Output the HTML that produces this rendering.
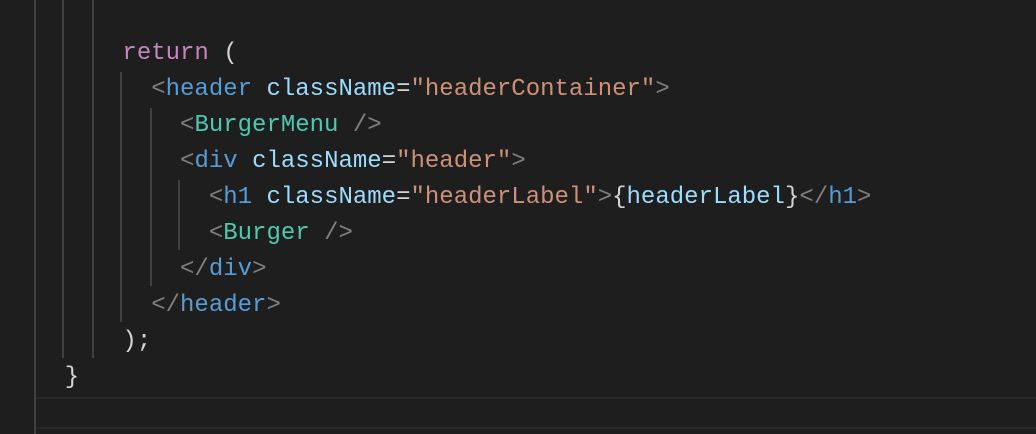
<!DOCTYPE html>
<html><head><meta charset="utf-8"><style>
html,body{margin:0;padding:0;background:#1e1e1e;width:1036px;height:434px;overflow:hidden;position:relative}
.l{position:absolute;left:36px;height:36px;line-height:36px;font-family:"Liberation Mono",monospace;font-size:24px;white-space:pre;color:#d4d4d4}
.g{position:absolute;width:2px;background:#404040}
.k{color:#c586c0}.p{color:#808080}.t{color:#569cd6}.a{color:#9cdcfe}.s{color:#ce9178}.c{color:#4ec9b0}
.cur{position:absolute;left:36px;right:0;top:397px;height:28px;border-top:2px solid #282828;border-bottom:2px solid #282828}
</style></head><body>
<div class="cur"></div>
<div class="g" style="left:34px;top:0;height:434px"></div>
<div class="g" style="left:62px;top:0;height:358px"></div>
<div class="g" style="left:92px;top:0;height:358px"></div>
<div class="g" style="left:120px;top:72px;height:250px"></div>
<div class="g" style="left:150px;top:108px;height:178px"></div>
<div class="g" style="left:178px;top:180px;height:70px"></div>
<div class="l" style="top:36px">      <span class="k">return</span> (</div>
<div class="l" style="top:72px">        <span class="p">&lt;</span><span class="t">header</span> <span class="a">className</span>=<span class="s">"headerContainer"</span><span class="p">&gt;</span></div>
<div class="l" style="top:108px">          <span class="p">&lt;</span><span class="c">BurgerMenu</span> <span class="p">/&gt;</span></div>
<div class="l" style="top:144px">          <span class="p">&lt;</span><span class="t">div</span> <span class="a">className</span>=<span class="s">"header"</span><span class="p">&gt;</span></div>
<div class="l" style="top:180px">            <span class="p">&lt;</span><span class="t">h1</span> <span class="a">className</span>=<span class="s">"headerLabel"</span><span class="p">&gt;</span>{<span class="a">headerLabel</span>}<span class="p">&lt;/</span><span class="t">h1</span><span class="p">&gt;</span></div>
<div class="l" style="top:216px">            <span class="p">&lt;</span><span class="c">Burger</span> <span class="p">/&gt;</span></div>
<div class="l" style="top:252px">          <span class="p">&lt;/</span><span class="t">div</span><span class="p">&gt;</span></div>
<div class="l" style="top:288px">        <span class="p">&lt;/</span><span class="t">header</span><span class="p">&gt;</span></div>
<div class="l" style="top:324px">      );</div>
<div class="l" style="top:360px">  }</div>
</body></html>
